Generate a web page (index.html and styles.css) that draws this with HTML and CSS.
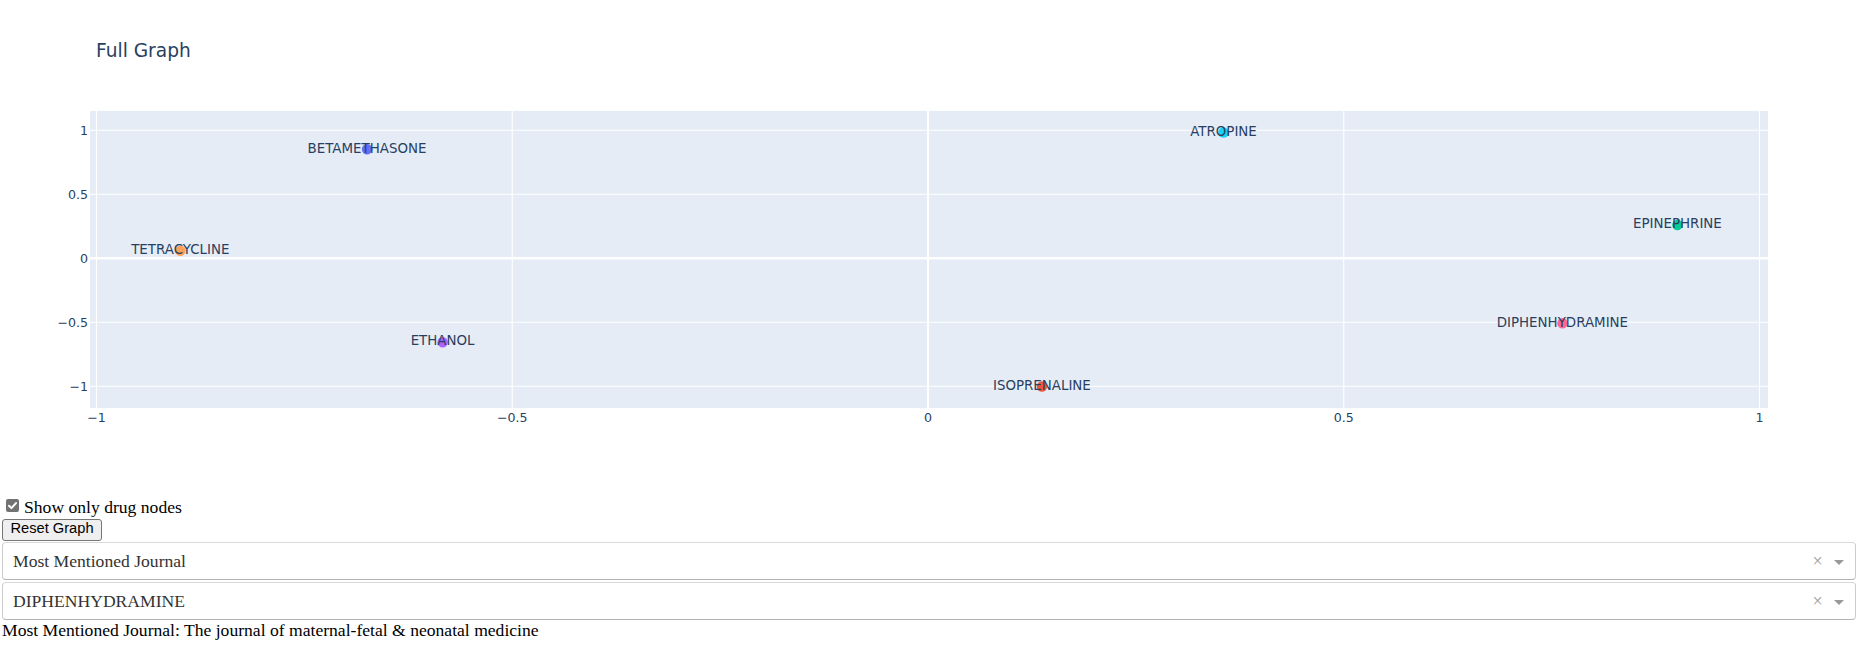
FILE: index.html
```html
<!DOCTYPE html>
<html>
<head>
<meta charset="utf-8">
<title>Full Graph</title>
<link rel="stylesheet" href="styles.css">
</head>
<body>
<div class="app">
  <div class="graph">
    <svg class="plot" width="1854" height="497" viewBox="2 0 1854 497">
      <text class="title" x="96" y="57">Full Graph</text>
      <rect x="90" y="111" width="1678" height="297" fill="#e5ecf6"/>
      <g class="grid">
        <line x1="96.5" y1="111" x2="96.5" y2="408"/>
        <line x1="512.25" y1="111" x2="512.25" y2="408"/>
        <line x1="1343.75" y1="111" x2="1343.75" y2="408"/>
        <line x1="1759.5" y1="111" x2="1759.5" y2="408"/>
        <line x1="90" y1="130.3" x2="1768" y2="130.3"/>
        <line x1="90" y1="194.3" x2="1768" y2="194.3"/>
        <line x1="90" y1="322.3" x2="1768" y2="322.3"/>
        <line x1="90" y1="386.3" x2="1768" y2="386.3"/>
      </g>
      <g class="zero">
        <line x1="928" y1="111" x2="928" y2="408"/>
        <line class="zy" x1="90" y1="258.3" x2="1768" y2="258.3"/>
      </g>
      <g class="tick ytick">
        <text x="88" y="134.7">1</text>
        <text x="88" y="198.7">0.5</text>
        <text x="88" y="262.7">0</text>
        <text x="88" y="326.7">−0.5</text>
        <text x="88" y="390.7">−1</text>
      </g>
      <g class="tick xtick">
        <text x="96.5" y="422">−1</text>
        <text x="512.25" y="422">−0.5</text>
        <text x="928" y="422">0</text>
        <text x="1343.75" y="422">0.5</text>
        <text x="1759.5" y="422">1</text>
      </g>
      <g class="nodes">
        <circle cx="367" cy="149.3" r="5.2" fill="#636efa"/>
        <circle cx="1041.9" cy="386.5" r="5.2" fill="#ef553b"/>
        <circle cx="1677.4" cy="225" r="5.2" fill="#00cc96"/>
        <circle cx="442.6" cy="342.2" r="5.2" fill="#ab63fa"/>
        <circle cx="180.3" cy="250.7" r="5.2" fill="#ffa15a"/>
        <circle cx="1223.5" cy="132.5" r="5.2" fill="#19d3f3"/>
        <circle cx="1562.4" cy="323.3" r="5.2" fill="#ff6692"/>
      </g>
      <g class="label">
        <text x="367" y="152.6">BETAMETHASONE</text>
        <text x="1041.9" y="389.7">ISOPRENALINE</text>
        <text x="1677.4" y="228.2">EPINEPHRINE</text>
        <text x="442.6" y="345.4">ETHANOL</text>
        <text x="180.3" y="254.2">TETRACYCLINE</text>
        <text x="1223.5" y="136">ATROPINE</text>
        <text x="1562.4" y="326.8">DIPHENHYDRAMINE</text>
      </g>
    </svg>
  </div>

  <label class="check-row">
    <span class="chk"><svg width="13" height="13" viewBox="0 0 13 13"><path d="M3 6.8 L5.4 9.1 L10 4.1" fill="none" stroke="#ffffff" stroke-width="2" stroke-linecap="round" stroke-linejoin="round"/></svg></span>Show only drug nodes
  </label>

  <div class="btn-row">
    <button class="btn" type="button">Reset Graph</button>
  </div>

  <div class="dd">
    <div class="dd-value">Most Mentioned Journal</div>
    <span class="dd-clear">×</span>
    <span class="dd-arrow-zone"><span class="dd-arrow"></span></span>
  </div>

  <div class="dd dd-second">
    <div class="dd-value">DIPHENHYDRAMINE</div>
    <span class="dd-clear">×</span>
    <span class="dd-arrow-zone"><span class="dd-arrow"></span></span>
  </div>

  <div class="result">Most Mentioned Journal: The journal of maternal-fetal &amp; neonatal medicine</div>
</div>
</body>
</html>
```

FILE: styles.css
```css
html, body {
  margin: 0;
  padding: 0;
  background: #ffffff;
}

body {
  font-family: "Liberation Serif", "Times New Roman", serif;
  font-size: 17.6px;
  color: #000000;
}

.app {
  margin-left: 2px;
  width: 1854px;
}

.graph {
  height: 497px;
}

.plot {
  display: block;
}

.title {
  font-family: "DejaVu Sans", Verdana, sans-serif;
  font-size: 18.6px;
  fill: #2a3f5f;
}

.grid line {
  stroke: #ffffff;
  stroke-width: 1.1;
}

.zero line {
  stroke: #ffffff;
  stroke-width: 2;
}

.zero .zy {
  stroke-width: 2.6;
}

.tick text {
  font-family: "DejaVu Sans", Verdana, sans-serif;
  font-size: 12.6px;
  fill: #2a3f5f;
}

.label text {
  font-family: "DejaVu Sans", Verdana, sans-serif;
  font-size: 13.4px;
  fill: #2a3f5f;
  text-anchor: middle;
}

.ytick text {
  text-anchor: end;
}

.xtick text {
  text-anchor: middle;
}

.check-row {
  display: block;
  height: 21px;
  line-height: 21px;
  white-space: nowrap;
}

.chk {
  display: inline-block;
  width: 13px;
  height: 13px;
  margin: 2px 5px 0 4px;
  vertical-align: top;
  background: #737373;
  border-radius: 2px;
}

.chk svg {
  display: block;
}

.btn-row {
  height: 23px;
}

.btn {
  display: block;
  margin: 1px 0 0 0;
  width: 100px;
  height: 22px;
  box-sizing: border-box;
  padding: 0 0 3px 0;
  font-family: "Liberation Sans", Arial, sans-serif;
  font-size: 14.67px;
  line-height: 17px;
  color: #000000;
  background: #efefef;
  border: 1px solid #767676;
  border-radius: 3px;
  text-align: center;
}

.dd {
  display: flex;
  align-items: center;
  height: 38px;
  box-sizing: border-box;
  border: 1px solid #cccccc;
  border-color: #d9d9d9 #cccccc #b3b3b3;
  border-radius: 4px;
  background: #ffffff;
}

.dd-second {
  margin-top: 2px;
}

.dd-value {
  flex: 1;
  padding-left: 10px;
  color: #333333;
  white-space: nowrap;
}

.dd-clear {
  width: 17px;
  margin-right: 4px;
  text-align: center;
  font-size: 18px;
  line-height: 1;
  color: #999999;
}

.dd-arrow-zone {
  display: flex;
  justify-content: center;
  width: 25px;
  box-sizing: border-box;
  padding-right: 7px;
}

.dd-arrow {
  display: block;
  width: 0;
  height: 0;
  margin-top: 2.5px;
  border-style: solid;
  border-width: 5.5px 5.5px 0 5.5px;
  border-color: #999999 transparent transparent transparent;
}

.result {
  white-space: nowrap;
}
```
